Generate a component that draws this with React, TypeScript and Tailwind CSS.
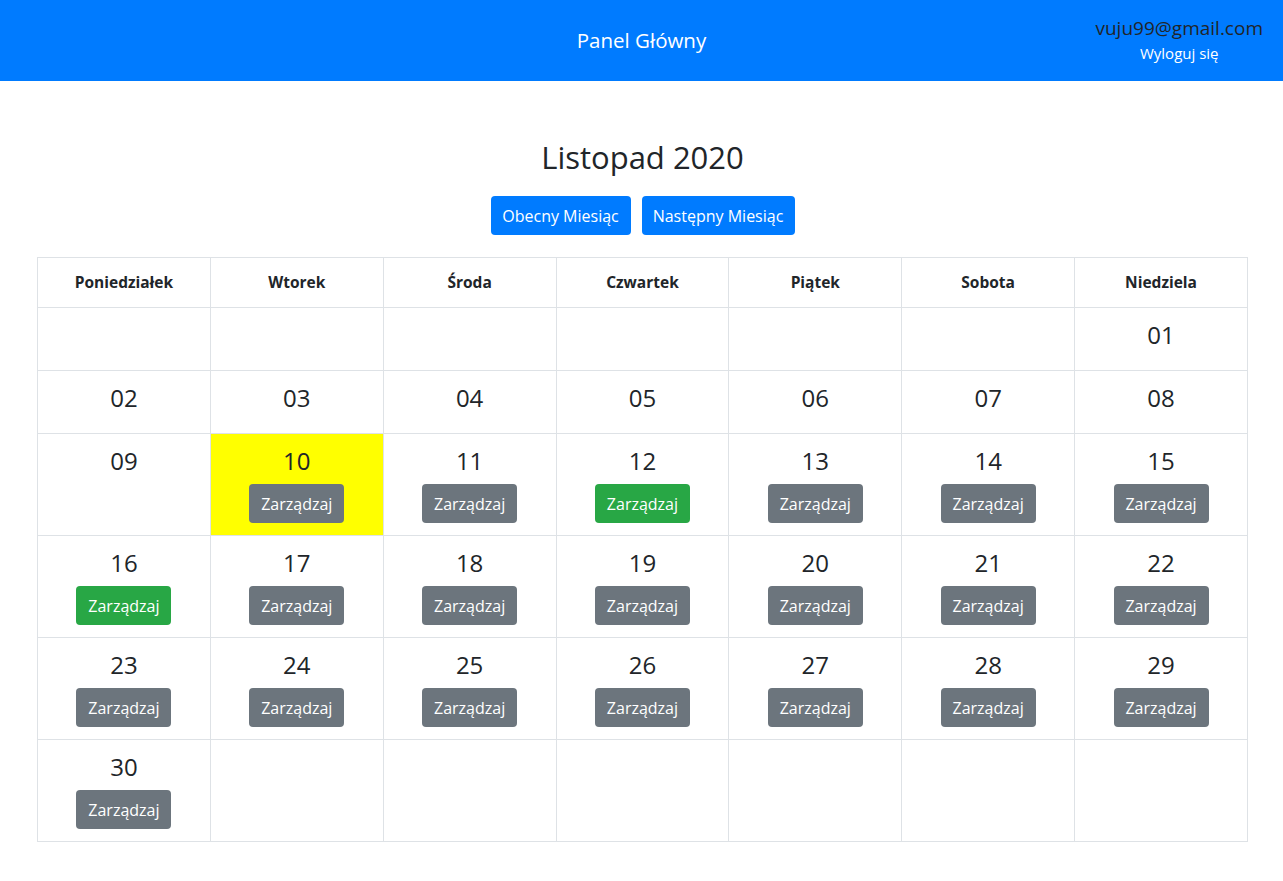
import React from 'react';

type Day = { n: number; color?: 'gray' | 'green'; today?: boolean };

const headers = ['Poniedziałek', 'Wtorek', 'Środa', 'Czwartek', 'Piątek', 'Sobota', 'Niedziela'];

// Listopad 2020 zaczyna się w niedzielę
const cells: (Day | null)[] = [
  null, null, null, null, null, null, { n: 1 },
  { n: 2 }, { n: 3 }, { n: 4 }, { n: 5 }, { n: 6 }, { n: 7 }, { n: 8 },
  { n: 9 }, { n: 10, color: 'gray', today: true }, { n: 11, color: 'gray' }, { n: 12, color: 'green' },
  { n: 13, color: 'gray' }, { n: 14, color: 'gray' }, { n: 15, color: 'gray' },
  { n: 16, color: 'green' }, { n: 17, color: 'gray' }, { n: 18, color: 'gray' }, { n: 19, color: 'gray' },
  { n: 20, color: 'gray' }, { n: 21, color: 'gray' }, { n: 22, color: 'gray' },
  { n: 23, color: 'gray' }, { n: 24, color: 'gray' }, { n: 25, color: 'gray' }, { n: 26, color: 'gray' },
  { n: 27, color: 'gray' }, { n: 28, color: 'gray' }, { n: 29, color: 'gray' },
  { n: 30, color: 'gray' }, null, null, null, null, null, null,
];

function rows() {
  const out: (Day | null)[][] = [];
  for (let i = 0; i < cells.length; i += 7) out.push(cells.slice(i, i + 7));
  return out;
}

function DayCell({ day }: { day: Day | null }) {
  if (!day) return <td className="border border-[#dee2e6] p-3 align-top" />;
  return (
    <td className={`border border-[#dee2e6] p-3 align-top text-center ${day.today ? 'bg-[#ffff00]' : ''}`}>
      <div className="text-[24px] leading-[30px] mb-2">{String(day.n).padStart(2, '0')}</div>
      {day.color && (
        <button
          className={`h-[39px] w-[95px] rounded text-[16px] text-white ${day.color === 'green' ? 'bg-[#28a745]' : 'bg-[#6c757d]'}`}
        >
          Zarządzaj
        </button>
      )}
    </td>
  );
}

export default function App() {
  return (
    <div className="min-h-screen bg-white text-[#212529]" style={{ fontFamily: '"Open Sans", "Noto Sans", sans-serif' }}>
      <header className="h-[81px] bg-[#007bff] grid grid-cols-[1fr_auto_1fr]">
        <div />
        <div className="flex items-center text-white text-[20.5px]">Panel Główny</div>
        <div className="flex justify-end pt-[14px]">
          <div className="flex flex-col items-center mr-[20px]">
            <span className="text-[19px] leading-[28px] text-[#212529]">vuju99@gmail.com</span>
            <span className="text-[15px] leading-[22px] text-white">Wyloguj się</span>
          </div>
        </div>
      </header>

      <main className="pl-[37px] pr-[35px]">
        <h2 className="text-center text-[31px] leading-[38px] mt-[57px] mb-[20px]">Listopad 2020</h2>
        <div className="flex justify-center gap-[11px] mb-[22px]">
          <button className="h-[39px] w-[140px] rounded bg-[#007bff] text-white text-[16px]">Obecny Miesiąc</button>
          <button className="h-[39px] w-[153px] rounded bg-[#007bff] text-white text-[16px]">Następny Miesiąc</button>
        </div>

        <table className="w-full table-fixed border-collapse">
          <thead>
            <tr>
              {headers.map((h) => (
                <th key={h} className="border border-[#dee2e6] h-[50px] text-[15.5px] font-bold text-center">
                  {h}
                </th>
              ))}
            </tr>
          </thead>
          <tbody>
            {rows().map((r, i) => (
              <tr key={i}>
                {r.map((d, j) => (
                  <DayCell key={j} day={d} />
                ))}
              </tr>
            ))}
          </tbody>
        </table>
      </main>
    </div>
  );
}
